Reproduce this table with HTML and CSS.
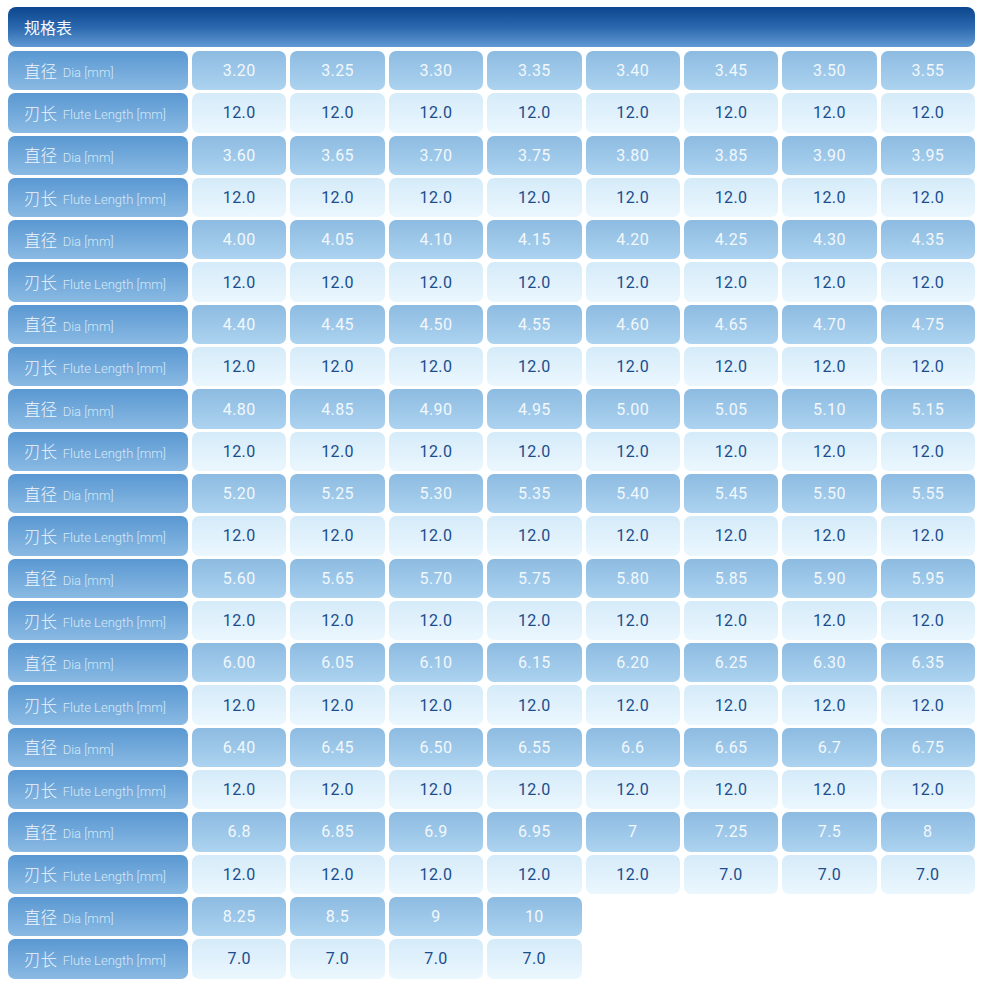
FILE: index.html
```html
<!DOCTYPE html>
<html lang="zh">
<head>
<meta charset="utf-8">
<title>规格表</title>
<link rel="stylesheet" href="styles.css">
</head>
<body>
<div class="spec">
  <div class="spec-title">规格表</div>
  <div class="spec-grid">
    <div class="lbl">直径 <span class="en">Dia [mm]</span></div>
    <div class="dia">3.20</div><div class="dia">3.25</div><div class="dia">3.30</div><div class="dia">3.35</div><div class="dia">3.40</div><div class="dia">3.45</div><div class="dia">3.50</div><div class="dia">3.55</div>
    <div class="lbl">刃长 <span class="en">Flute Length [mm]</span></div>
    <div class="fl">12.0</div><div class="fl">12.0</div><div class="fl">12.0</div><div class="fl">12.0</div><div class="fl">12.0</div><div class="fl">12.0</div><div class="fl">12.0</div><div class="fl">12.0</div>

    <div class="lbl">直径 <span class="en">Dia [mm]</span></div>
    <div class="dia">3.60</div><div class="dia">3.65</div><div class="dia">3.70</div><div class="dia">3.75</div><div class="dia">3.80</div><div class="dia">3.85</div><div class="dia">3.90</div><div class="dia">3.95</div>
    <div class="lbl">刃长 <span class="en">Flute Length [mm]</span></div>
    <div class="fl">12.0</div><div class="fl">12.0</div><div class="fl">12.0</div><div class="fl">12.0</div><div class="fl">12.0</div><div class="fl">12.0</div><div class="fl">12.0</div><div class="fl">12.0</div>

    <div class="lbl">直径 <span class="en">Dia [mm]</span></div>
    <div class="dia">4.00</div><div class="dia">4.05</div><div class="dia">4.10</div><div class="dia">4.15</div><div class="dia">4.20</div><div class="dia">4.25</div><div class="dia">4.30</div><div class="dia">4.35</div>
    <div class="lbl">刃长 <span class="en">Flute Length [mm]</span></div>
    <div class="fl">12.0</div><div class="fl">12.0</div><div class="fl">12.0</div><div class="fl">12.0</div><div class="fl">12.0</div><div class="fl">12.0</div><div class="fl">12.0</div><div class="fl">12.0</div>

    <div class="lbl">直径 <span class="en">Dia [mm]</span></div>
    <div class="dia">4.40</div><div class="dia">4.45</div><div class="dia">4.50</div><div class="dia">4.55</div><div class="dia">4.60</div><div class="dia">4.65</div><div class="dia">4.70</div><div class="dia">4.75</div>
    <div class="lbl">刃长 <span class="en">Flute Length [mm]</span></div>
    <div class="fl">12.0</div><div class="fl">12.0</div><div class="fl">12.0</div><div class="fl">12.0</div><div class="fl">12.0</div><div class="fl">12.0</div><div class="fl">12.0</div><div class="fl">12.0</div>

    <div class="lbl">直径 <span class="en">Dia [mm]</span></div>
    <div class="dia">4.80</div><div class="dia">4.85</div><div class="dia">4.90</div><div class="dia">4.95</div><div class="dia">5.00</div><div class="dia">5.05</div><div class="dia">5.10</div><div class="dia">5.15</div>
    <div class="lbl">刃长 <span class="en">Flute Length [mm]</span></div>
    <div class="fl">12.0</div><div class="fl">12.0</div><div class="fl">12.0</div><div class="fl">12.0</div><div class="fl">12.0</div><div class="fl">12.0</div><div class="fl">12.0</div><div class="fl">12.0</div>

    <div class="lbl">直径 <span class="en">Dia [mm]</span></div>
    <div class="dia">5.20</div><div class="dia">5.25</div><div class="dia">5.30</div><div class="dia">5.35</div><div class="dia">5.40</div><div class="dia">5.45</div><div class="dia">5.50</div><div class="dia">5.55</div>
    <div class="lbl">刃长 <span class="en">Flute Length [mm]</span></div>
    <div class="fl">12.0</div><div class="fl">12.0</div><div class="fl">12.0</div><div class="fl">12.0</div><div class="fl">12.0</div><div class="fl">12.0</div><div class="fl">12.0</div><div class="fl">12.0</div>

    <div class="lbl">直径 <span class="en">Dia [mm]</span></div>
    <div class="dia">5.60</div><div class="dia">5.65</div><div class="dia">5.70</div><div class="dia">5.75</div><div class="dia">5.80</div><div class="dia">5.85</div><div class="dia">5.90</div><div class="dia">5.95</div>
    <div class="lbl">刃长 <span class="en">Flute Length [mm]</span></div>
    <div class="fl">12.0</div><div class="fl">12.0</div><div class="fl">12.0</div><div class="fl">12.0</div><div class="fl">12.0</div><div class="fl">12.0</div><div class="fl">12.0</div><div class="fl">12.0</div>

    <div class="lbl">直径 <span class="en">Dia [mm]</span></div>
    <div class="dia">6.00</div><div class="dia">6.05</div><div class="dia">6.10</div><div class="dia">6.15</div><div class="dia">6.20</div><div class="dia">6.25</div><div class="dia">6.30</div><div class="dia">6.35</div>
    <div class="lbl">刃长 <span class="en">Flute Length [mm]</span></div>
    <div class="fl">12.0</div><div class="fl">12.0</div><div class="fl">12.0</div><div class="fl">12.0</div><div class="fl">12.0</div><div class="fl">12.0</div><div class="fl">12.0</div><div class="fl">12.0</div>

    <div class="lbl">直径 <span class="en">Dia [mm]</span></div>
    <div class="dia">6.40</div><div class="dia">6.45</div><div class="dia">6.50</div><div class="dia">6.55</div><div class="dia">6.6</div><div class="dia">6.65</div><div class="dia">6.7</div><div class="dia">6.75</div>
    <div class="lbl">刃长 <span class="en">Flute Length [mm]</span></div>
    <div class="fl">12.0</div><div class="fl">12.0</div><div class="fl">12.0</div><div class="fl">12.0</div><div class="fl">12.0</div><div class="fl">12.0</div><div class="fl">12.0</div><div class="fl">12.0</div>

    <div class="lbl">直径 <span class="en">Dia [mm]</span></div>
    <div class="dia">6.8</div><div class="dia">6.85</div><div class="dia">6.9</div><div class="dia">6.95</div><div class="dia">7</div><div class="dia">7.25</div><div class="dia">7.5</div><div class="dia">8</div>
    <div class="lbl">刃长 <span class="en">Flute Length [mm]</span></div>
    <div class="fl">12.0</div><div class="fl">12.0</div><div class="fl">12.0</div><div class="fl">12.0</div><div class="fl">12.0</div><div class="fl">7.0</div><div class="fl">7.0</div><div class="fl">7.0</div>

    <div class="lbl">直径 <span class="en">Dia [mm]</span></div>
    <div class="dia">8.25</div><div class="dia">8.5</div><div class="dia">9</div><div class="dia">10</div>
    <div class="lbl">刃长 <span class="en">Flute Length [mm]</span></div>
    <div class="fl">7.0</div><div class="fl">7.0</div><div class="fl">7.0</div><div class="fl">7.0</div>
  </div>
</div>
</body>
</html>
```
FILE: styles.css
```css
html, body {
  margin: 0;
  padding: 0;
  background: #ffffff;
}
body {
  padding: 7px 0 0 8px;
  font-family: Roboto, "Noto Sans CJK SC", sans-serif;
}
.spec {
  width: 967px;
}
.spec-title {
  height: 40px;
  box-sizing: border-box;
  padding-left: 16px;
  display: flex;
  align-items: center;
  border-radius: 8px;
  background: linear-gradient(to bottom, #0c468e 0%, #2a67ad 50%, #6099d3 100%);
  color: #f4f8fc;
  font-family: "Noto Sans CJK SC", sans-serif;
  font-size: 16px;
  margin-bottom: 4px;
}
.spec-grid {
  display: grid;
  grid-template-columns: 180px repeat(8, 1fr);
  grid-auto-rows: 39.3px;
  column-gap: 4px;
  row-gap: 3px;
}
.spec-grid > div {
  border-radius: 7px;
  display: flex;
  align-items: center;
}
.lbl {
  grid-column: 1;
  padding-left: 16px;
  background: linear-gradient(to bottom, #5a98d2 0%, #8abae3 100%);
  color: #eef5fb;
  font-family: "Noto Sans CJK SC", sans-serif;
  font-size: 16.5px;
  font-weight: 300;
  white-space: pre;
}
.lbl .en {
  font-family: Roboto, sans-serif;
  font-size: 13px;
  font-weight: 300;
  color: #d6e9f7;
  margin-left: 2px;
  padding-top: 4px;
}
.dia, .fl {
  justify-content: center;
  font-size: 16px;
  letter-spacing: 0.4px;
}
.dia {
  background: linear-gradient(to bottom, #8dbbe1 0%, #acd3f0 100%);
  color: #f2f8fc;
}
.fl {
  background: linear-gradient(to bottom, #d5ebf9 0%, #ebf7fe 100%);
  color: #1b4d8c;
}
```
